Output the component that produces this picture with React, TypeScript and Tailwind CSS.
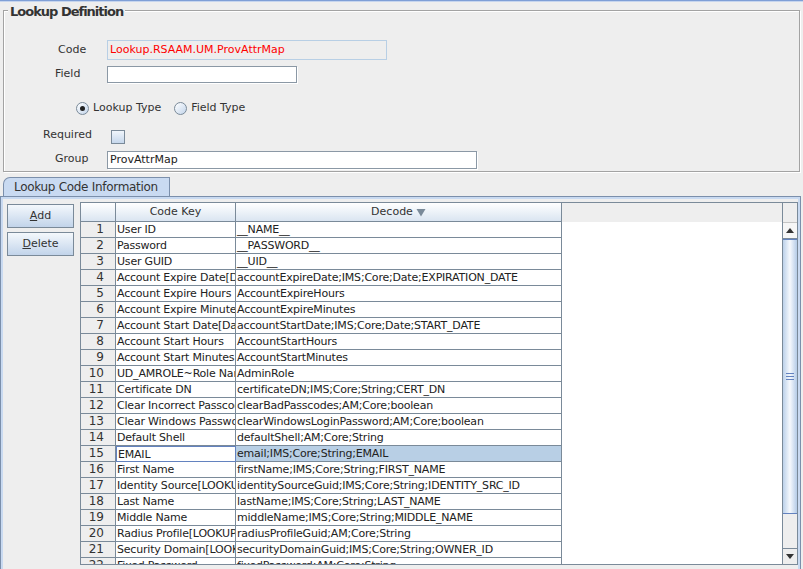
import { type ReactNode } from "react";

const font = "font-['DejaVu_Sans',sans-serif]";

const rows: [string, string][] = [
  ["User ID", "__NAME__"],
  ["Password", "__PASSWORD__"],
  ["User GUID", "__UID__"],
  ["Account Expire Date[Date]", "accountExpireDate;IMS;Core;Date;EXPIRATION_DATE"],
  ["Account Expire Hours", "AccountExpireHours"],
  ["Account Expire Minutes", "AccountExpireMinutes"],
  ["Account Start Date[Date]", "accountStartDate;IMS;Core;Date;START_DATE"],
  ["Account Start Hours", "AccountStartHours"],
  ["Account Start Minutes", "AccountStartMinutes"],
  ["UD_AMROLE~Role Name", "AdminRole"],
  ["Certificate DN", "certificateDN;IMS;Core;String;CERT_DN"],
  ["Clear Incorrect Passcodes", "clearBadPasscodes;AM;Core;boolean"],
  ["Clear Windows Password", "clearWindowsLoginPassword;AM;Core;boolean"],
  ["Default Shell", "defaultShell;AM;Core;String"],
  ["EMAIL", "email;IMS;Core;String;EMAIL"],
  ["First Name", "firstName;IMS;Core;String;FIRST_NAME"],
  ["Identity Source[LOOKUP]", "identitySourceGuid;IMS;Core;String;IDENTITY_SRC_ID"],
  ["Last Name", "lastName;IMS;Core;String;LAST_NAME"],
  ["Middle Name", "middleName;IMS;Core;String;MIDDLE_NAME"],
  ["Radius Profile[LOOKUP]", "radiusProfileGuid;AM;Core;String"],
  ["Security Domain[LOOKUP]", "securityDomainGuid;IMS;Core;String;OWNER_ID"],
  ["Fixed Password", "fixedPassword;AM;Core;String"],
];

const SELECTED = 14;

function FormRow({ label, labelClass, children, className }: { label: string; labelClass: string; children: ReactNode; className: string }) {
  return (
    <div className={`flex items-center ${className}`}>
      <div className={`w-[103px] shrink-0 text-[#333] ${labelClass}`}>{label}</div>
      {children}
    </div>
  );
}

function Radio({ checked, label }: { checked?: boolean; label: string }) {
  return (
    <div className="flex items-center gap-[4px]">
      <span className="flex h-[13px] w-[13px] items-center justify-center rounded-full border border-[#7a8a99] bg-linear-to-br from-white to-[#c3d5eb]">
        {checked && <span className="h-[5px] w-[5px] rounded-full bg-[#222]" />}
      </span>
      <span className="text-[#333]">{label}</span>
    </div>
  );
}

function OceanButton({ mnemonic, rest }: { mnemonic: string; rest: string }) {
  return (
    <button className="h-[24px] w-[67px] border border-[#7a8a99] bg-linear-to-b from-[#f4f8fc] to-[#c2d4ea] text-[#333]">
      <span className="underline">{mnemonic}</span>
      {rest}
    </button>
  );
}

export default function App() {
  return (
    <div className={`${font} text-[11px] h-[569px] w-[803px] overflow-hidden bg-[#eeeeee]`}>
      <div className="h-[1px] bg-[#7f9fd6]" />
      <div className="h-[1px] bg-[#c6d5ee]" />

      {/* Lookup Definition group */}
      <div className="relative ml-[3px] mt-[8px] h-[162px] w-[797px] border border-[#a3a3a3] shadow-[1px_1px_0_#fff,inset_1px_1px_0_#fff]">
        <div className="absolute left-[4px] top-[-7px] bg-[#eeeeee] px-[2px] text-[13px] font-bold leading-[15px] tracking-[-1px] text-[#333]">
          Lookup Definition
        </div>

        <FormRow label="Code" labelClass="pl-[54px]" className="mt-[29px] h-[20px]">
          <div className="flex h-[20px] w-[280px] items-center border border-[#b8cfe5] bg-[#eeeeee] pl-[2px] text-[#ff0000]">
            Lookup.RSAAM.UM.ProvAttrMap
          </div>
        </FormRow>

        <FormRow label="Field" labelClass="pl-[51px]" className="mt-[6px] h-[17px]">
          <div className="h-[17px] w-[190px] border border-[#8b98a5] bg-white shadow-[1px_1px_0_#fff]" />
        </FormRow>

        <div className="mt-[17px] flex h-[16px] items-center gap-[13px] pl-[72px]">
          <Radio checked label="Lookup Type" />
          <Radio label="Field Type" />
        </div>

        <FormRow label="Required" labelClass="pl-[39px] -translate-y-[2px]" className="mt-[14px] h-[14px]">
          <span className="ml-[4px] h-[14px] w-[14px] border border-[#7a8a99] bg-linear-to-b from-[#f0f5fb] to-[#c6d7ec]" />
        </FormRow>

        <FormRow label="Group" labelClass="pl-[51px] -translate-y-[1px]" className="mt-[7px] h-[18px]">
          <div className="flex h-[18px] w-[370px] items-center border border-[#8b98a5] bg-white pl-[2px] text-[#222] shadow-[1px_1px_0_#fff]">
            ProvAttrMap
          </div>
        </FormRow>
      </div>

      {/* Tab */}
      <div className="ml-[3px] mt-[5px] flex h-[19px] w-[167px] items-center rounded-tl-[7px] border-x border-t border-[#7b8fab] bg-[#c9daf1] pl-[10px] text-[12px] tracking-[-0.3px] text-[#333]">
        Lookup Code Information
      </div>

      {/* Tab panel */}
      <div className="h-[380px] w-[801px] border border-[#7b8fab] bg-[#c9daf1] p-[2px]">
        <div className="flex h-full bg-[#eeeeee] pt-[3px]">
          <div className="flex w-[77px] shrink-0 flex-col gap-[4px] pl-[4px] pt-[2px]">
            <OceanButton mnemonic="A" rest="dd" />
            <OceanButton mnemonic="D" rest="elete" />
          </div>

          {/* Scroll pane */}
          <div className="flex h-[363px] w-[718px] border border-[#7a8a99] bg-white">
            <div className="flex flex-1 flex-col overflow-hidden">
              <div className="flex h-[19px] shrink-0 bg-[#eeeeee] text-[#333]">
                <div className="w-[35px] border-r border-b border-[#7a8a99] bg-linear-to-b from-white to-[#dae5f1]" />
                <div className="flex w-[120px] items-center justify-center border-r border-b border-[#7a8a99] bg-linear-to-b from-white to-[#dae5f1]">
                  Code Key
                </div>
                <div className="flex w-[326px] items-center justify-center gap-[3px] border-r border-b border-[#7a8a99] bg-linear-to-b from-white to-[#dae5f1]">
                  Decode
                  <svg width="10" height="9" viewBox="0 0 10 9">
                    <path d="M0.5 1 L9.5 1 L5 8.5 Z" fill="#7a8a99" />
                  </svg>
                </div>
              </div>
              <div className="flex-1 overflow-hidden">
                {rows.map(([key, decode], i) => (
                  <div key={i} className="flex h-[16px] text-[#222] tracking-[-0.2px]">
                    <div className="w-[35px] shrink-0 border-r border-b border-[#7a8a99] bg-[#eeeeee] pr-[11px] text-right leading-[15px] text-[#333] text-[12px] tracking-normal">
                      {i + 1}
                    </div>
                    <div
                      className={`w-[120px] shrink-0 overflow-hidden whitespace-nowrap border-b pl-[1px] leading-[15px] ${
                        i === SELECTED ? "border border-[#6382bf] bg-white" : "border-r border-[#7a8a99]"
                      }`}
                    >
                      {key}
                    </div>
                    <div
                      className={`w-[326px] shrink-0 overflow-hidden whitespace-nowrap border-r border-b border-[#7a8a99] pl-[1px] leading-[15px] ${
                        i === SELECTED ? "bg-[#b8cfe5]" : ""
                      }`}
                    >
                      {decode}
                    </div>
                  </div>
                ))}
              </div>
            </div>

            {/* Vertical scrollbar */}
            <div className="flex w-[15px] shrink-0 flex-col border-l border-[#7a8a99] bg-[#eeeeee]">
              <div className="h-[20px] shrink-0 border-b border-[#c4c4c4]" />
              <div className="flex h-[16px] shrink-0 items-center justify-center border-b border-[#7a8a99] bg-[#f6f6f6]">
                <svg width="8" height="5" viewBox="0 0 8 5">
                  <path d="M0 5 L4 0 L8 5 Z" fill="#333" />
                </svg>
              </div>
              <div className="flex h-[275px] shrink-0 items-center justify-center border-y border-[#6382bf] bg-linear-to-r from-[#bcd1ea] via-[#f6f9fd] to-[#b5cce7]">
                <div className="flex flex-col gap-[2px]">
                  <span className="h-[1px] w-[8px] bg-[#6382bf]" />
                  <span className="h-[1px] w-[8px] bg-[#6382bf]" />
                  <span className="h-[1px] w-[8px] bg-[#6382bf]" />
                </div>
              </div>
              <div className="flex-1" />
              <div className="flex h-[16px] shrink-0 items-center justify-center border-t border-[#7a8a99]">
                <svg width="8" height="5" viewBox="0 0 8 5">
                  <path d="M0 0 L8 0 L4 5 Z" fill="#333" />
                </svg>
              </div>
            </div>
          </div>
        </div>
      </div>
    </div>
  );
}
